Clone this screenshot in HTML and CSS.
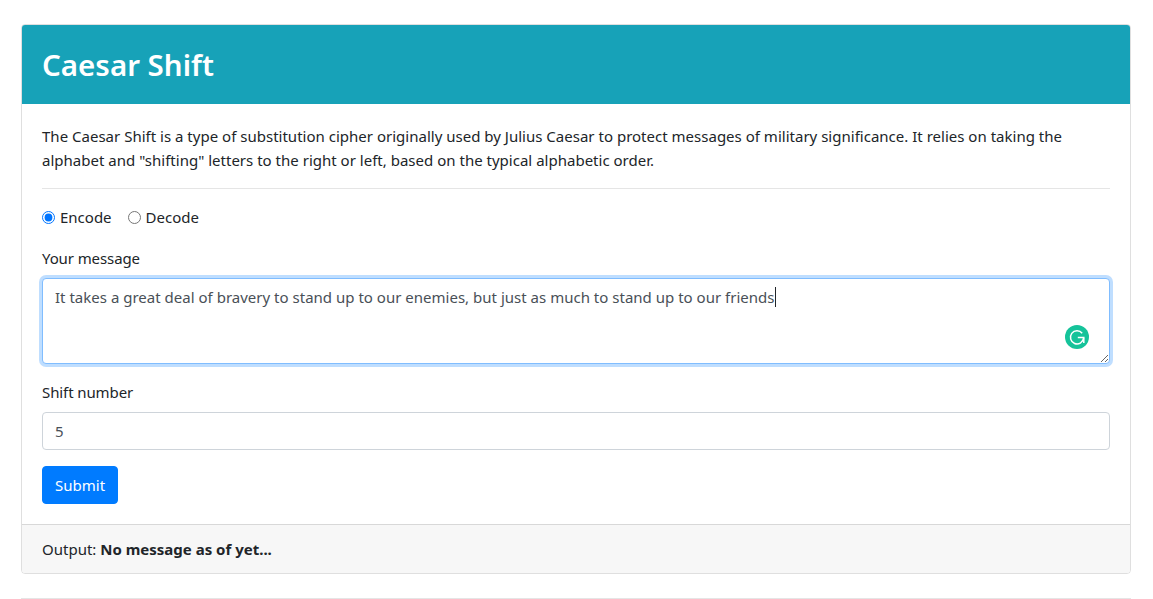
FILE: index.html
```html
<!DOCTYPE html>
<html lang="en">
<head>
<meta charset="utf-8">
<title>Caesar Shift</title>
<link rel="stylesheet" href="styles.css">
</head>
<body>
<main class="page">
  <section class="card">
    <header class="card-header"><h1>Caesar Shift</h1></header>
    <div class="card-body">
      <p class="intro">The Caesar Shift is a type of substitution cipher originally used by Julius Caesar to protect messages of military significance. It relies on taking the alphabet and "shifting" letters to the right or left, based on the typical alphabetic order.</p>
      <hr class="rule">
      <form class="form">
        <div class="radios">
          <label class="radio"><input type="radio" name="mode" checked><span>Encode</span></label>
          <label class="radio"><input type="radio" name="mode"><span>Decode</span></label>
        </div>
        <div class="group">
          <label class="label">Your message</label>
          <div class="textarea-wrap">
            <div class="textarea" role="textbox" aria-multiline="true">It takes a great deal of bravery to stand up to our enemies, but just as much to stand up to our friends<span class="caret"></span></div>
            <svg class="grammarly" viewBox="0 0 24 24" width="24" height="24" aria-hidden="true">
              <circle cx="12" cy="12" r="12" fill="#15c39a"/>
              <path d="M17.2 8.2A6.6 6.6 0 1 0 18.6 13.2" fill="none" stroke="#fff" stroke-width="1.5"/>
              <path d="M12.8 12.4H18.8V18" fill="none" stroke="#fff" stroke-width="1.5"/>
            </svg>
          </div>
        </div>
        <div class="group">
          <label class="label">Shift number</label>
          <input class="input" type="text" value="5">
        </div>
        <button class="btn" type="button">Submit</button>
      </form>
    </div>
    <footer class="card-footer">Output: <strong>No message as of yet...</strong></footer>
  </section>
  <hr class="page-rule">
</main>
</body>
</html>
```
FILE: styles.css
```css
* { box-sizing: border-box; }
html, body { margin: 0; }
body {
  font-family: "Noto Sans", "Open Sans", sans-serif;
  font-size: 15px;
  line-height: 24px;
  color: #212529;
  background: #fff;
}
.page { padding: 24px 21px 0 21px; width: 1152px; }
.card {
  border: 1px solid rgba(0,0,0,.125);
  border-radius: 4px;
  display: flex;
  flex-direction: column;
}
.card-header {
  background: #17a2b8;
  color: #fff;
  height: 79px;
  padding: 0 20px;
  border-radius: 3px 3px 0 0;
  display: flex;
  align-items: center;
}
.card-header h1 {
  margin: 0;
  font-size: 29.5px;
  font-weight: 600;
  line-height: 38px;
}
.card-body { padding: 20px; }
.intro { margin: 0; letter-spacing: .01px; }
.rule { border: 0; border-top: 1px solid rgba(0,0,0,.1); margin: 16px 0; }
.form { display: flex; flex-direction: column; align-items: stretch; }
.radios { display: flex; gap: 16px; height: 24px; margin-bottom: 17px; }
.radio { display: inline-flex; align-items: center; }
.radio input { margin: 0 5px 0 0; width: 13px; height: 13px; accent-color: #0075ff; }
.group { margin-bottom: 16px; display: flex; flex-direction: column; }
.label { margin-bottom: 8px; display: block; letter-spacing: -.1px; }
.textarea-wrap { position: relative; display: flex; }
.textarea {
  width: 100%;
  height: 86px;
  padding: 6px 12px;
  color: #495057;
  letter-spacing: .01px;
  border: 1px solid #80bdff;
  border-radius: 4px;
  box-shadow: 0 0 0 3px rgba(0,123,255,.25);
  resize: vertical;
  overflow: auto;
  background: #fff;
}
.caret { display: inline-block; width: 1px; height: 20px; background: #212529; vertical-align: -4px; }
.grammarly { position: absolute; right: 21px; bottom: 15px; }
.input {
  width: 100%;
  height: 38px;
  padding: 6px 12px;
  font: inherit;
  color: #495057;
  border: 1px solid #ced4da;
  border-radius: 4px;
  background: #fff;
}
.btn {
  align-self: flex-start;
  height: 38px;
  padding: 6px 12px;
  font: inherit;
  color: #fff;
  background: #007bff;
  border: 1px solid #007bff;
  border-radius: 4px;
}
.card-footer {
  background: #f7f7f7;
  border-top: 1px solid rgba(0,0,0,.125);
  height: 49px;
  padding: 12px 20px;
  border-radius: 0 0 3px 3px;
}
.card-footer strong { font-weight: 700; }
.page-rule { border: 0; border-top: 1px solid rgba(0,0,0,.1); margin: 24px 0 0; }
```
